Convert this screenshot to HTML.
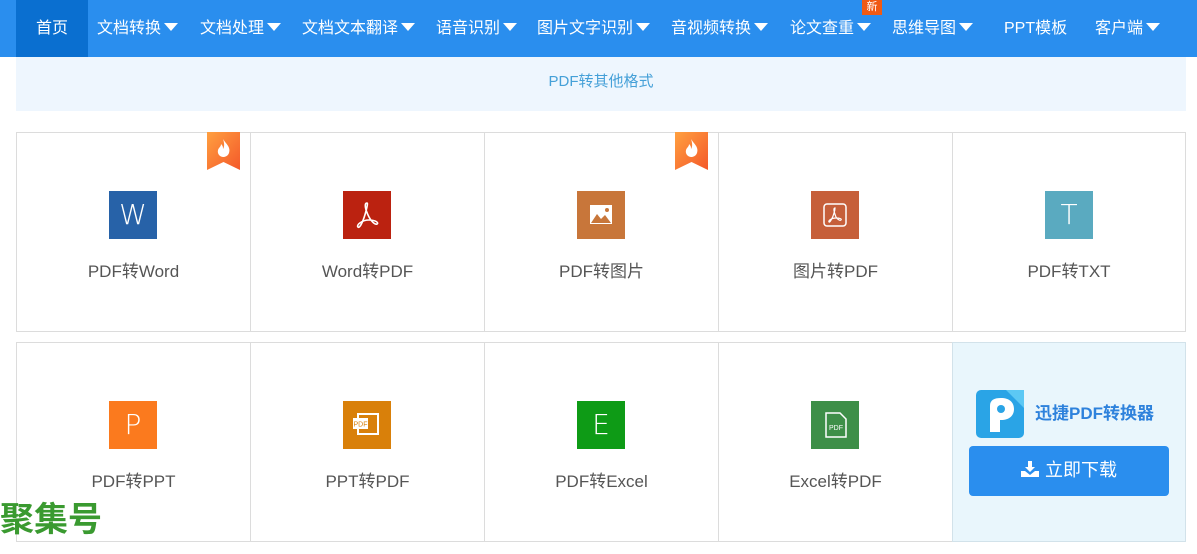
<!DOCTYPE html>
<html><head><meta charset="utf-8"><style>
*{margin:0;padding:0;box-sizing:border-box}
body{width:1197px;height:554px;overflow:hidden;background:#fff;font-family:"Liberation Sans","Noto Sans CJK SC",sans-serif;position:relative}
.nav{position:absolute;left:0;top:0;width:1197px;height:57px;background:#2a8eee}
.nav span{position:absolute;top:0;height:57px;line-height:57px;color:#fff;font-size:16px;white-space:nowrap}
.tri{display:inline-block;width:0;height:0;border-left:7px solid transparent;border-right:7px solid transparent;border-top:8px solid #fff;margin-left:3px;vertical-align:2px}
.home{left:16px;width:72px;background:#0a6fd0;text-align:center}
.new{position:absolute;left:862px;top:0;width:20px;height:15px;background:#f05a14;color:#fff;font-size:11px;line-height:14px;text-align:center}
.band{position:absolute;left:16px;top:57px;width:1170px;height:54px;background:#eef6fe;color:#45a0d8;font-size:15px;text-align:center;line-height:50px}
.cell{position:absolute;width:235px;height:200px;border:1px solid #dcdcdc;background:#fff}
.ic{position:absolute;left:92px;top:58px;width:48px;height:48px;color:#fff;font-size:28px;text-align:center;line-height:48px;font-family:"DejaVu Sans","Liberation Sans",sans-serif;font-weight:200}
.lb{position:absolute;left:0;width:100%;top:124px;text-align:center;font-size:17px;color:#555}
.fire{position:absolute;left:190px;top:-1px;width:33px;height:38px}
</style></head><body>
<div class="nav">
<span class="home">首页</span>
<span style="left:97px">文档转换<i class="tri"></i></span>
<span style="left:200px">文档处理<i class="tri"></i></span>
<span style="left:302px">文档文本翻译<i class="tri"></i></span>
<span style="left:436px">语音识别<i class="tri"></i></span>
<span style="left:537px">图片文字识别<i class="tri"></i></span>
<span style="left:671px">音视频转换<i class="tri"></i></span>
<span style="left:790px">论文查重<i class="tri"></i></span>
<span style="left:892px">思维导图<i class="tri"></i></span>
<span style="left:1004px">PPT模板</span>
<span style="left:1095px">客户端<i class="tri"></i></span>
<div class="new">新</div>
</div>
<div class="band">PDF转其他格式</div>

<div class="cell" style="left:16px;top:132px"><div class="ic" style="background:#2762a8">W</div><div class="lb">PDF转Word</div>
<svg class="fire" viewBox="0 0 33 38"><defs><linearGradient id="g" x1="0" y1="0" x2="1" y2="1"><stop offset="0" stop-color="#ffa040"/><stop offset="1" stop-color="#f4582a"/></linearGradient></defs><path d="M0 0H33V38L16.5 30L0 38Z" fill="url(#g)"/><path d="M16 7C19 12 24 15 22 21C21 24 18 25 16.5 25C13 25 10 22 11 18C12 15 14 15 14 12C16 14 16 15 16 17C18 14 17 10 16 7Z" fill="#fff"/></svg></div>
<div class="cell" style="left:250px;top:132px"><div class="ic" style="background:#bb2210"><svg width="48" height="48" viewBox="0 0 48 48"><path d="M24 12C21 12 22 18 26 26C28 30 32 34 34 33C36 32 33 29 26 29C19 29 13 34 15 36C17 38 21 28 23 20C24 16 25 12 24 12Z" fill="none" stroke="#fff" stroke-width="1.6"/></svg></div><div class="lb">Word转PDF</div></div>
<div class="cell" style="left:484px;top:132px"><div class="ic" style="background:#c8763a"><svg width="48" height="48" viewBox="0 0 48 48"><rect x="13" y="14" width="22" height="19" fill="#fff"/><path d="M14 32L20 23L24 28L28 24L34 32Z" fill="#c8763a"/><circle cx="30" cy="19" r="2" fill="#c8763a"/></svg></div><div class="lb">PDF转图片</div>
<svg class="fire" viewBox="0 0 33 38"><path d="M0 0H33V38L16.5 30L0 38Z" fill="url(#g)"/><path d="M16 7C19 12 24 15 22 21C21 24 18 25 16.5 25C13 25 10 22 11 18C12 15 14 15 14 12C16 14 16 15 16 17C18 14 17 10 16 7Z" fill="#fff"/></svg></div>
<div class="cell" style="left:718px;top:132px"><div class="ic" style="background:#c65f3a"><svg width="48" height="48" viewBox="0 0 48 48"><rect x="13" y="13" width="22" height="22" rx="3" fill="none" stroke="#fff" stroke-width="1.5"/><path d="M24 17C22 17 23 21 25 26C26 28 29 30 30 29C31 28 29 27 25 27C20 27 17 30 18 31C19 32 22 26 23 22C24 19 24 17 24 17Z" fill="none" stroke="#fff" stroke-width="1.2"/></svg></div><div class="lb">图片转PDF</div></div>
<div class="cell" style="left:952px;top:132px;width:234px"><div class="ic" style="background:#5aaac0">T</div><div class="lb">PDF转TXT</div></div>

<div class="cell" style="left:16px;top:342px"><div class="ic" style="background:#fb7a1e">P</div><div class="lb">PDF转PPT</div></div>
<div class="cell" style="left:250px;top:342px"><div class="ic" style="background:#d9800a"><svg width="48" height="48" viewBox="0 0 48 48"><rect x="15" y="13" width="20" height="20" fill="none" stroke="#fff" stroke-width="2"/><rect x="10" y="17" width="15" height="11" fill="#fff"/><text x="17.5" y="25.5" font-size="7" fill="#d9800a" text-anchor="middle" font-family="Liberation Sans">PDF</text></svg></div><div class="lb">PPT转PDF</div></div>
<div class="cell" style="left:484px;top:342px"><div class="ic" style="background:#0e9b16">E</div><div class="lb">PDF转Excel</div></div>
<div class="cell" style="left:718px;top:342px"><div class="ic" style="background:#3e8f48"><svg width="48" height="48" viewBox="0 0 48 48"><path d="M15 12H29L35 18V36H15Z" fill="none" stroke="#fff" stroke-width="1.5"/><text x="25" y="29" font-size="7" fill="#fff" text-anchor="middle" font-family="Liberation Sans">PDF</text></svg></div><div class="lb">Excel转PDF</div></div>
<div class="cell" style="left:952px;top:342px;width:234px;background:#e9f6fc;border-color:#d2e2ea">
<svg style="position:absolute;left:23px;top:47px" width="48" height="48" viewBox="0 0 48 48"><rect width="48" height="48" rx="5" fill="#2aa4e6"/><path d="M30 0H48V18Z" fill="#5cc8f4"/><path d="M14 42V16C14 10 18 8 25 8C33 8 38 12 38 19C38 26 33 30 25 30H24V42Z" fill="#fff"/><circle cx="25" cy="19" r="4" fill="#2aa4e6"/></svg>
<div style="position:absolute;left:82px;top:56px;font-size:17px;font-weight:bold;color:#2e82dc">迅捷PDF转换器</div>
<div style="position:absolute;left:16px;top:103px;width:200px;height:50px;border-radius:4px;background:#2a8eee;color:#fff;font-size:18px;text-align:center;line-height:48px"><svg width="18" height="16" viewBox="0 0 18 16" style="vertical-align:-1px;margin-right:6px"><path d="M7 0H11V6H14L9 11L4 6H7Z M0 10H4L9 14L14 10H18V16H0Z" fill="#fff"/></svg>立即下载</div>
</div>

<div style="position:absolute;left:0;top:500px;font-size:34px;font-weight:bold;color:#3a9a30;line-height:40px">聚集号</div>
</body></html>
